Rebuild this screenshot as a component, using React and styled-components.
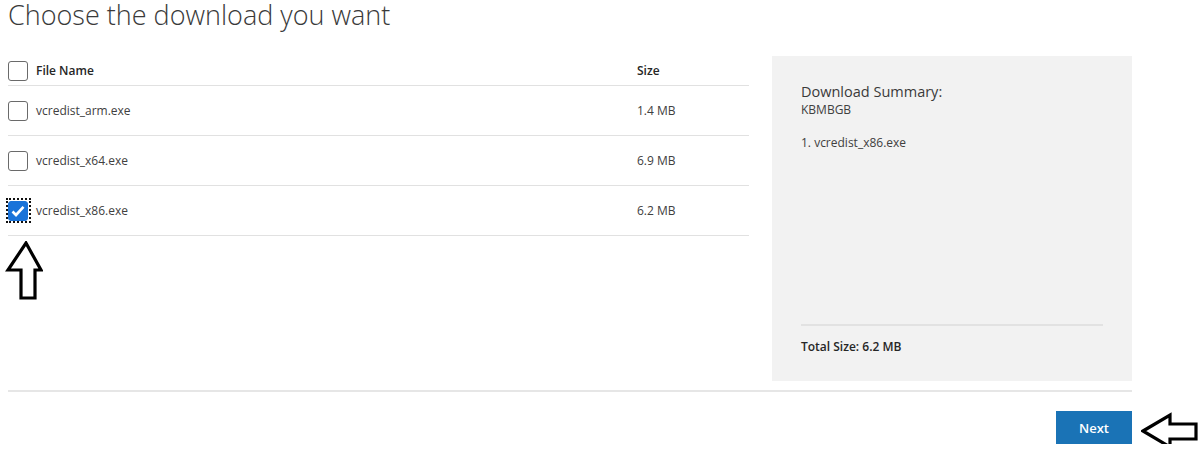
import styled, { createGlobalStyle } from "styled-components";

const GlobalStyle = createGlobalStyle`
  body {
    margin: 0;
    background: #fff;
    font-family: "Open Sans", "Noto Sans", Arial, sans-serif;
    color: #333;
  }
`;

const Page = styled.div`
  width: 1124px;
  padding: 0 8px;
`;

const Title = styled.h1`
  margin: 0;
  height: 56px;
  font-size: 27px;
  font-weight: 300;
  line-height: 30px;
  color: #3a3a3a;
`;

const Main = styled.div`
  display: flex;
  gap: 23px;
  align-items: flex-start;
`;

const TableCol = styled.div`
  width: 741px;
`;

const Row = styled.div`
  display: flex;
  align-items: center;
  box-sizing: border-box;
  height: ${(p) => (p.$header ? "30px" : "50px")};
  border-bottom: 1px solid #e1e1e1;
  font-size: 12px;
  font-weight: ${(p) => (p.$header ? 600 : 400)};
  color: ${(p) => (p.$header ? "#262626" : "#404040")};
`;

const NameCell = styled.div`
  flex: 1;
  padding-left: 8px;
`;

const SizeCell = styled.div`
  width: 112px;
`;

const Box = styled.span`
  position: relative;
  box-sizing: border-box;
  width: 20px;
  height: 20px;
  border-radius: 3px;
  border: 1px solid ${(p) => (p.$checked ? "#1a73d9" : "#6a6a6a")};
  background: ${(p) => (p.$checked ? "#1a73d9" : "#fff")};
  display: flex;
  align-items: center;
  justify-content: center;
  flex-shrink: 0;
  ${(p) =>
    p.$checked &&
    `
    &::after {
      content: "";
      position: absolute;
      left: -3px;
      top: -4px;
      right: -4px;
      bottom: -3px;
      border: 2px dotted #111;
    }
  `}
`;

const UpArrow = styled.svg`
  display: block;
  margin: 5px 0 0 -3px;
`;

const Summary = styled.div`
  width: 360px;
  height: 325px;
  box-sizing: border-box;
  background: #f2f2f2;
  padding: 26px 29px 26px;
  display: flex;
  flex-direction: column;
`;

const SummaryTitle = styled.div`
  font-size: 14.5px;
  line-height: 20px;
  color: #3a3a3a;
`;

const SummarySub = styled.div`
  font-size: 12px;
  line-height: 16px;
  color: #404040;
`;

const SummaryItem = styled.div`
  margin-top: 16px;
  font-size: 12px;
  color: #404040;
  flex: 1;
`;

const Divider = styled.div`
  height: 2px;
  background: #e2e2e2;
`;

const Total = styled.div`
  margin-top: 12px;
  font-size: 12px;
  font-weight: 600;
  color: #262626;
`;

const Rule = styled.div`
  height: 2px;
  background: #e6e6e6;
  margin-top: 9px;
`;

const Footer = styled.div`
  display: flex;
  justify-content: flex-end;
  margin-top: 19px;
`;

const ButtonWrap = styled.div`
  position: relative;
`;

const NextButton = styled.button`
  width: 76px;
  height: 33px;
  border: none;
  background: #1a73b6;
  color: #fff;
  font-family: inherit;
  font-size: 13px;
  font-weight: 600;
  cursor: pointer;
`;

const SideArrow = styled.svg`
  position: absolute;
  left: calc(100% + 9px);
  top: 1px;
`;

const Check = () => (
  <svg width="14" height="12" viewBox="0 0 14 12">
    <path d="M1.5 6.5 L5 10 L12.5 1.8" fill="none" stroke="#fff" strokeWidth="2.6" />
  </svg>
);

const files = [
  { name: "vcredist_arm.exe", size: "1.4 MB" },
  { name: "vcredist_x64.exe", size: "6.9 MB" },
  { name: "vcredist_x86.exe", size: "6.2 MB", checked: true },
];

export default function App() {
  return (
    <Page>
      <GlobalStyle />
      <Title>Choose the download you want</Title>
      <Main>
        <TableCol>
          <Row $header>
            <Box />
            <NameCell>File Name</NameCell>
            <SizeCell>Size</SizeCell>
          </Row>
          {files.map((f) => (
            <Row key={f.name}>
              <Box $checked={f.checked}>{f.checked && <Check />}</Box>
              <NameCell>{f.name}</NameCell>
              <SizeCell>{f.size}</SizeCell>
            </Row>
          ))}
          <UpArrow width="38" height="60" viewBox="0 0 38 60">
            <path
              d="M21 2 L36 29 L30 29 L30 57 L16 57 L16 29 L3 29 Z"
              fill="#fff"
              stroke="#000"
              strokeWidth="3.2"
            />
          </UpArrow>
        </TableCol>
        <Summary>
          <SummaryTitle>Download Summary:</SummaryTitle>
          <SummarySub>KBMBGB</SummarySub>
          <SummaryItem>1. vcredist_x86.exe</SummaryItem>
          <Divider />
          <Total>Total Size: 6.2 MB</Total>
        </Summary>
      </Main>
      <Rule />
      <Footer>
        <ButtonWrap>
          <NextButton>Next</NextButton>
          <SideArrow width="58" height="38" viewBox="0 0 58 38">
            <path
              d="M2 19 L29 3 L29 12 L55 12 L55 27 L29 27 L29 35 Z"
              fill="#fff"
              stroke="#000"
              strokeWidth="3.2"
            />
          </SideArrow>
        </ButtonWrap>
      </Footer>
    </Page>
  );
}
